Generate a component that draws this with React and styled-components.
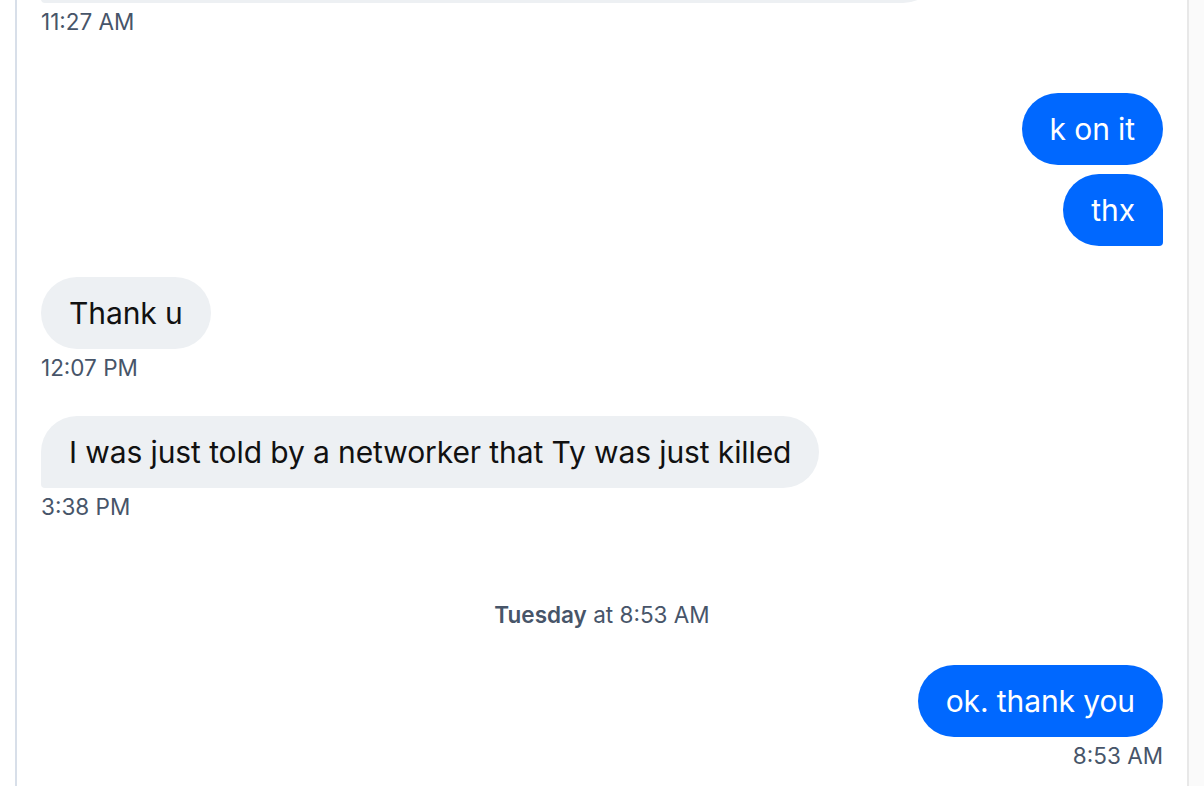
import styled, { createGlobalStyle } from "styled-components";

const GlobalStyle = createGlobalStyle`
  html, body {
    margin: 0;
    padding: 0;
    background: #ffffff;
    font-family: Inter, "Noto Sans", "Liberation Sans", sans-serif;
  }
  * {
    box-sizing: border-box;
  }
`;

const Page = styled.div`
  display: flex;
  height: 786px;
  padding-left: 15px;
  background: #ffffff;
`;

const Thread = styled.div`
  flex: 1;
  display: flex;
  flex-direction: column;
  justify-content: flex-end;
  overflow: hidden;
  border-left: 2px solid #d8dfe9;
  padding: 0 24px 15px;
`;

const Track = styled.div`
  width: 17px;
  background: #fafafa;
  border-left: 2px solid #e8e8e8;
`;

const Group = styled.div`
  display: flex;
  flex-direction: column;
  align-items: ${(p) => (p.$mine ? "flex-end" : "flex-start")};
  gap: 9px;
  margin-top: ${(p) => p.$gap || 0}px;
  flex-shrink: 0;
`;

const Bubble = styled.div`
  max-width: 80%;
  ${(p) => p.$wide && "width: 80%;"}
  padding: 18px 28px;
  font-size: 30px;
  line-height: 36px;
  letter-spacing: -0.1px;
  border-radius: 36px;
  color: ${(p) => (p.$mine ? "#ffffff" : "#111111")};
  background: ${(p) => (p.$mine ? "#0068ff" : "#edf0f3")};
  ${(p) =>
    p.$tail &&
    (p.$mine ? "border-bottom-right-radius: 4px;" : "border-bottom-left-radius: 4px;")}
`;

const Time = styled.div`
  margin-top: -5px;
  font-size: 22.5px;
  line-height: 30px;
  color: #475569;
`;

const Divider = styled.div`
  flex-shrink: 0;
  margin: ${(p) => p.$top}px 0 35px;
  text-align: center;
  font-size: 22.5px;
  line-height: 30px;
  color: #475569;

  b {
    font-weight: 600;
  }
`;

export default function App() {
  return (
    <>
      <GlobalStyle />
      <Page>
        <Thread>
          <Group>
            <Bubble $wide $tail>
              Can you send me the updated list of contacts from this morning?
            </Bubble>
            <Time>11:27 AM</Time>
          </Group>
          <Group $mine $gap={56}>
            <Bubble $mine>k on it</Bubble>
            <Bubble $mine $tail>thx</Bubble>
          </Group>
          <Group $gap={31}>
            <Bubble>Thank u</Bubble>
            <Time>12:07 PM</Time>
          </Group>
          <Group $gap={33}>
            <Bubble $tail>I was just told by a networker that Ty was just killed</Bubble>
            <Time>3:38 PM</Time>
          </Group>
          <Divider $top={78}>
            <b>Tuesday</b> at 8:53 AM
          </Divider>
          <Group $mine>
            <Bubble $mine>ok. thank you</Bubble>
            <Time>8:53 AM</Time>
          </Group>
        </Thread>
        <Track />
      </Page>
    </>
  );
}
